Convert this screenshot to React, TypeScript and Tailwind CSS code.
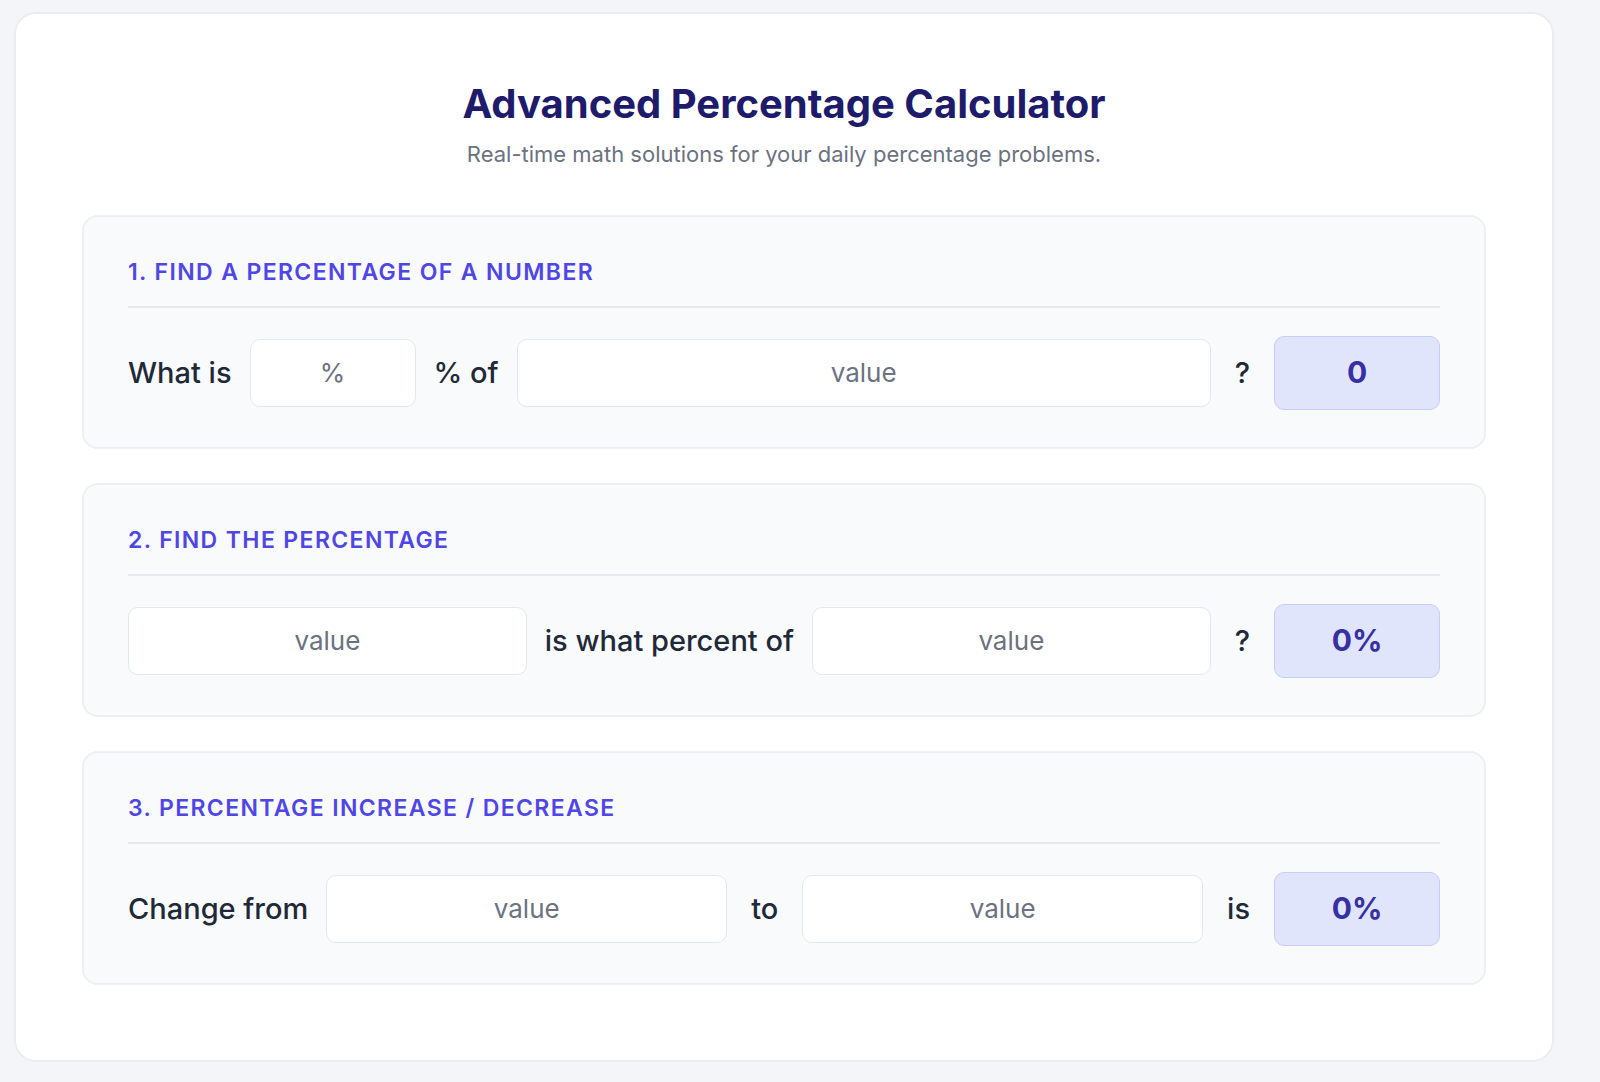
import React from "react";

const inputCls =
  "h-[68px] rounded-[10px] border border-[#e3e7ee] bg-white text-center text-[26px] text-[#4b5563] placeholder:text-[#6b7280] outline-none min-w-0";
const labelCls = "text-[29px] font-medium text-[#1f2937] whitespace-nowrap";

function Result({ v }: { v: string }) {
  return (
    <div className="h-[74px] w-[166px] shrink-0 rounded-[10px] border border-[#c7cdf5] bg-[#e0e5fc] flex items-center justify-center text-[30px] font-bold text-[#3730a3]">
      {v}
    </div>
  );
}

function Section({ title, children }: { title: string; children: React.ReactNode }) {
  return (
    <div className="rounded-[16px] border-2 border-[#eceff4] bg-[#f8fafc] px-[44px] pt-[38px] h-[234px]">
      <div className="text-[23px] font-semibold tracking-[0.06em] text-[#4f46e5] pb-[16px] border-b-2 border-[#e5e8ee]">
        {title}
      </div>
      <div className="flex items-center gap-[18px] mt-[28px]">{children}</div>
    </div>
  );
}

export default function App() {
  return (
    <div className="min-h-[1082px] bg-[#f3f5f9] p-[12px] pl-[14px] pr-[46px]" style={{ fontFamily: "Inter, 'Noto Sans', sans-serif" }}>
      <div className="h-[1050px] rounded-[22px] border-2 border-[#e9edf2] bg-white px-[66px] pt-[70px]">
        <h1 className="text-center text-[40px] font-bold text-[#1e1b6b] leading-none">Advanced Percentage Calculator</h1>
        <p className="text-center text-[22px] text-[#6b7280] mt-[14px]">Real-time math solutions for your daily percentage problems.</p>
        <div className="mt-[44px] flex flex-col gap-[34px]">
          <Section title="1. FIND A PERCENTAGE OF A NUMBER">
            <span className={labelCls}>What is</span>
            <input className={inputCls + " w-[166px]"} placeholder="%" />
            <span className={labelCls}>% of</span>
            <input className={inputCls + " flex-1"} placeholder="value" />
            <span className={labelCls + " px-[6px]"}>?</span>
            <Result v="0" />
          </Section>
          <Section title="2. FIND THE PERCENTAGE">
            <input className={inputCls + " flex-1"} placeholder="value" />
            <span className={labelCls}>is what percent of</span>
            <input className={inputCls + " flex-1"} placeholder="value" />
            <span className={labelCls + " px-[6px]"}>?</span>
            <Result v="0%" />
          </Section>
          <Section title="3. PERCENTAGE INCREASE / DECREASE">
            <span className={labelCls}>Change from</span>
            <input className={inputCls + " flex-1"} placeholder="value" />
            <span className={labelCls + " px-[6px]"}>to</span>
            <input className={inputCls + " flex-1"} placeholder="value" />
            <span className={labelCls + " px-[6px]"}>is</span>
            <Result v="0%" />
          </Section>
        </div>
      </div>
    </div>
  );
}
